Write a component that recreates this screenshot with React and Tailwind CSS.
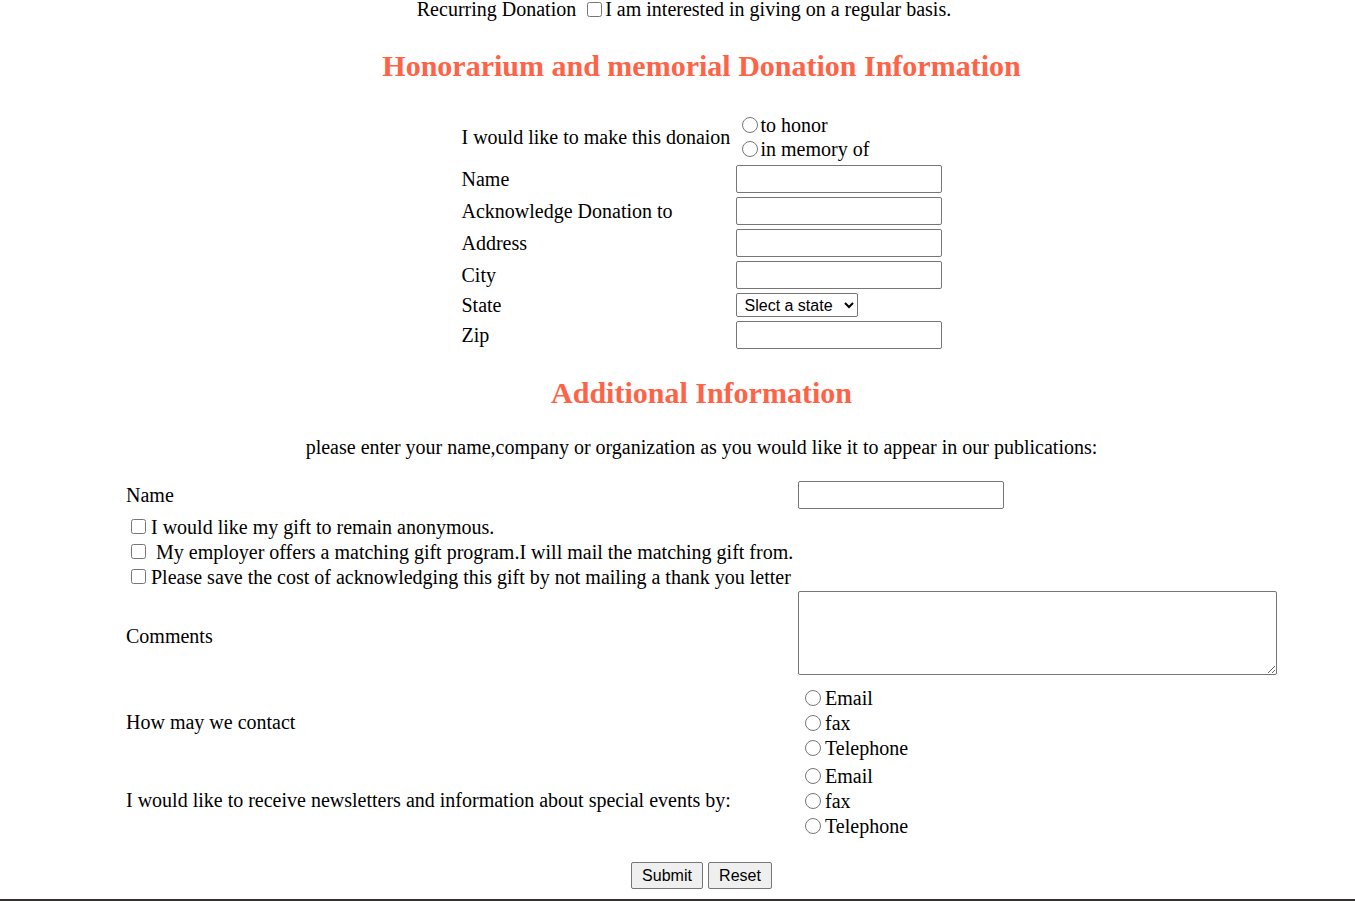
import React from "react";

const field =
  "w-[206px] h-[28px] border border-[#767676] rounded-[2px] bg-white px-1 text-[16px]";

function Radio({ label, className = "ml-[7px] mr-[4px]" }) {
  return (
    <label className="flex items-center h-[25px]">
      <input type="radio" className={`w-[16px] h-[16px] ${className}`} />
      <span>{label}</span>
    </label>
  );
}

function Check({ label }) {
  return (
    <label className="flex items-center h-[25px]">
      <input type="checkbox" className="w-[15px] h-[15px] ml-[5px] mr-[5px]" />
      <span className="whitespace-pre">{label}</span>
    </label>
  );
}

export default function App() {
  return (
    <div className="h-[901px] flex flex-col bg-white text-black font-['Liberation_Serif','Times_New_Roman',serif] text-[20px] overflow-hidden">
      <div className="pl-[48px]">
        <div className="flex justify-center items-center h-[18px] leading-[18px] pr-[35px]">
          <span>Recurring Donation</span>
          <input type="checkbox" className="w-[15px] h-[15px] ml-[11px] mr-[3px]" />
          <span>I am interested in giving on a regular basis.</span>
        </div>

        <h2 className="mt-[30px] text-center text-[#ff6347] font-bold text-[30px] leading-[36px]">
          Honorarium and memorial Donation Information
        </h2>

        <div className="mt-[29px] mx-auto w-[480px] grid grid-cols-[274px_206px] gap-y-[4px]">
          <div className="flex items-center h-[48px]">I would like to make this donaion</div>
          <div className="flex flex-col justify-center h-[48px]">
            <label className="flex items-center h-[24px]">
              <input type="radio" className="w-[16px] h-[16px] ml-[6px] mr-[3px]" />
              <span>to honor</span>
            </label>
            <label className="flex items-center h-[24px]">
              <input type="radio" className="w-[16px] h-[16px] ml-[6px] mr-[3px]" />
              <span>in memory of</span>
            </label>
          </div>

          {["Name", "Acknowledge Donation to", "Address", "City"].map((l) => (
            <React.Fragment key={l}>
              <div className="flex items-center h-[28px] pb-[1px]">{l}</div>
              <input type="text" className={field} />
            </React.Fragment>
          ))}

          <div className="flex items-center h-[24px]">State</div>
          <div className="flex h-[24px]">
            <select className="h-[24px] w-[122px] border border-[#767676] rounded-[2px] bg-white pl-[4px] text-[16px] font-['Liberation_Sans',Arial,sans-serif]">
              <option>Slect a state</option>
            </select>
          </div>

          <div className="flex items-center h-[28px]">Zip</div>
          <input type="text" className={field} />
        </div>

        <h2 className="mt-[26px] text-center text-[#ff6347] font-bold text-[30px] leading-[36px]">
          Additional Information
        </h2>

        <p className="mt-[25px] text-center leading-[23px]">
          please enter your name,company or organization as you would like it to appear in our publications:
        </p>

        <div className="mt-[22px] mx-auto w-[1151px] grid grid-cols-[672px_479px]">
          <div className="flex items-center h-[28px]">Name</div>
          <input type="text" className={field} />

          <div className="col-span-2 flex flex-col mt-[5px]">
            <Check label="I would like my gift to remain anonymous." />
            <Check label=" My employer offers a matching gift program.I will mail the matching gift from." />
            <Check label="Please save the cost of acknowledging this gift by not mailing a thank you letter" />
          </div>

          <div className="flex items-center mt-[2px] h-[84px] pt-[5px]">Comments</div>
          <textarea className="mt-[2px] w-[479px] h-[84px] border border-[#767676] rounded-[2px] bg-white" />

          <div className="flex items-center h-[76px] mt-[10px] pb-[3px]">How may we contact</div>
          <div className="flex flex-col mt-[10px]">
            <Radio label="Email" />
            <Radio label="fax" />
            <Radio label="Telephone" />
          </div>

          <div className="flex items-center h-[76px] mt-[2px] pb-[3px]">
            I would like to receive newsletters and information about special events by:
          </div>
          <div className="flex flex-col mt-[2px]">
            <Radio label="Email" />
            <Radio label="fax" />
            <Radio label="Telephone" />
          </div>
        </div>

        <div className="mt-[23px] flex justify-center gap-[5px]">
          <button className="w-[72px] h-[27px] border border-[#767676] rounded-[2px] bg-[#efefef] text-[16px] font-['Liberation_Sans',Arial,sans-serif]">
            Submit
          </button>
          <button className="w-[64px] h-[27px] border border-[#767676] rounded-[2px] bg-[#efefef] text-[16px] font-['Liberation_Sans',Arial,sans-serif]">
            Reset
          </button>
        </div>
      </div>
      <div className="mt-auto h-[2px] bg-[#38302a]" />
    </div>
  );
}
